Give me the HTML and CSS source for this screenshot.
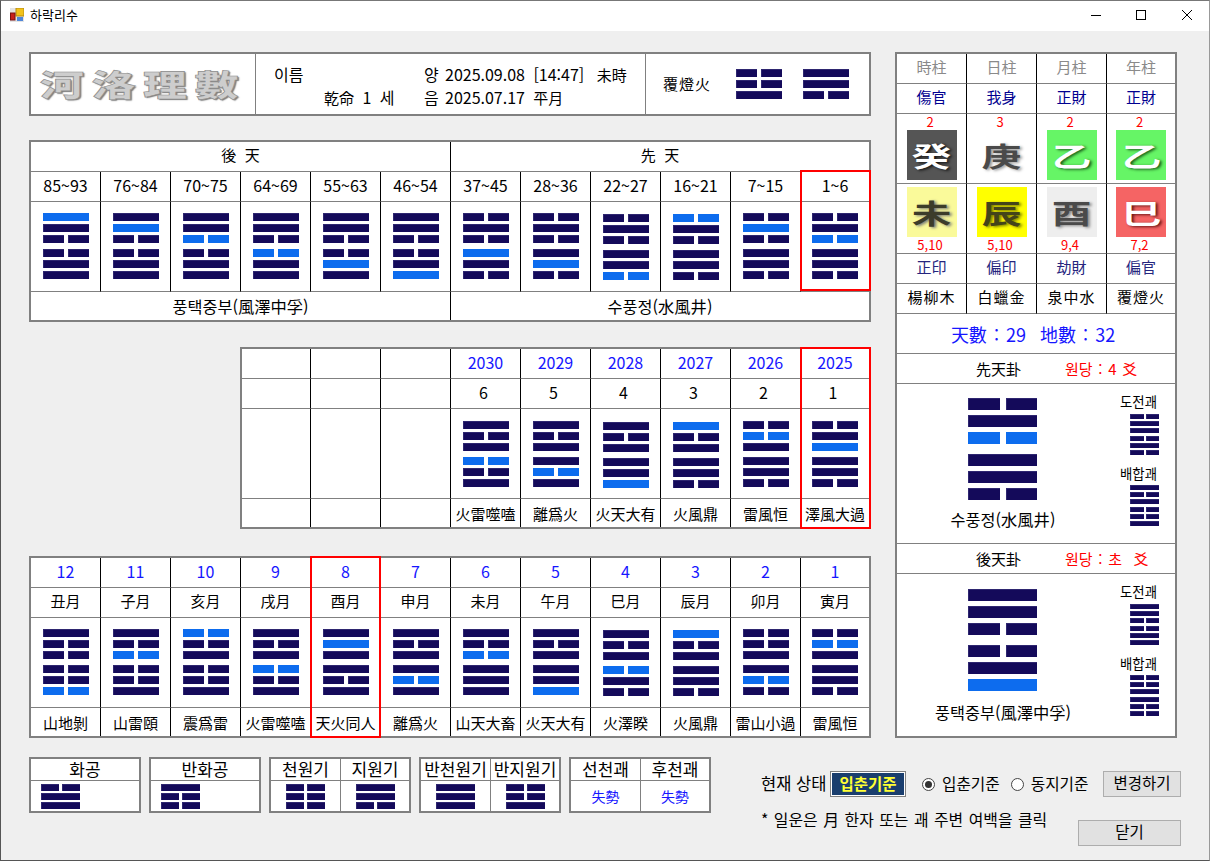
FILE: index.html
```html
<!DOCTYPE html>
<html lang="ko">
<head>
<meta charset="utf-8">
<title>하락리수</title>
<link rel="stylesheet" href="styles.css">
</head>
<body>
<div class="window">
  <header class="titlebar">
    <svg class="app-icon" viewBox="0 0 14 14" width="14" height="14"><rect x="0" y="0" width="14" height="14" fill="#e4e4e4"/><rect x="6" y="0" width="8" height="8" fill="#f2c21a" stroke="#b58a10" stroke-width="1"/><rect x="0.5" y="5" width="4.5" height="7" fill="#c8201c" stroke="#7a1010" stroke-width="1"/><rect x="7" y="9" width="6" height="4" fill="#4f86d8"/></svg>
    <span class="app-title">하락리수</span>
    <div class="controls">
      <svg viewBox="0 0 10 10" width="10" height="10"><path d="M0 5.5H10" stroke="#000" fill="none"/></svg>
      <svg viewBox="0 0 10 10" width="10" height="10"><rect x=".5" y=".5" width="9" height="9" stroke="#000" fill="none"/></svg>
      <svg viewBox="0 0 10 10" width="10" height="10"><path d="M0 0L10 10M10 0L0 10" stroke="#000" fill="none"/></svg>
    </div>
  </header>

  <main class="content">
    <div class="top">
      <div class="left">
        <section class="info box">
          <div class="logo"><span>河洛理數</span></div>
          <div class="person">
            <span class="kr">이름</span><span class="kr">양</span><span class="date"><span class="num">2025.09.08</span>  <span class="num">[14:47]</span>   未時</span>
            <span class="age">乾命  <span class="num">1</span>  <span class="kr">세</span></span><span class="kr">음</span><span class="date"><span class="num">2025.07.17</span>  平月</span>
          </div>
          <div class="nabeum">
            <span class="nab-name">覆燈火</span>
            <div class="hex tri"><i class="yin"></i><i class="yin"></i><i class="yang"></i></div>
            <div class="hex tri"><i class="yang"></i><i class="yang"></i><i class="yin"></i></div>
          </div>
        </section>

        <section class="grid box t-full">
          <div class="c span6 head">後  天</div><div class="c span6 head end">先  天</div>
          <div class="c num">85~93</div><div class="c num">76~84</div><div class="c num">70~75</div><div class="c num">64~69</div><div class="c num">55~63</div><div class="c num">46~54</div><div class="c num">37~45</div><div class="c num">28~36</div><div class="c num">22~27</div><div class="c num">16~21</div><div class="c num">7~15</div><div class="c num end">1~6</div>
          <div class="c h"><div class="hex"><i class="yang on"></i><i class="yang"></i><i class="yin"></i><i class="yin"></i><i class="yang"></i><i class="yang"></i></div></div>
          <div class="c h"><div class="hex"><i class="yang"></i><i class="yang on"></i><i class="yin"></i><i class="yin"></i><i class="yang"></i><i class="yang"></i></div></div>
          <div class="c h"><div class="hex"><i class="yang"></i><i class="yang"></i><i class="yin on"></i><i class="yin"></i><i class="yang"></i><i class="yang"></i></div></div>
          <div class="c h"><div class="hex"><i class="yang"></i><i class="yang"></i><i class="yin"></i><i class="yin on"></i><i class="yang"></i><i class="yang"></i></div></div>
          <div class="c h"><div class="hex"><i class="yang"></i><i class="yang"></i><i class="yin"></i><i class="yin"></i><i class="yang on"></i><i class="yang"></i></div></div>
          <div class="c h"><div class="hex"><i class="yang"></i><i class="yang"></i><i class="yin"></i><i class="yin"></i><i class="yang"></i><i class="yang on"></i></div></div>
          <div class="c h"><div class="hex"><i class="yin"></i><i class="yang"></i><i class="yin"></i><i class="yang on"></i><i class="yang"></i><i class="yin"></i></div></div>
          <div class="c h"><div class="hex"><i class="yin"></i><i class="yang"></i><i class="yin"></i><i class="yang"></i><i class="yang on"></i><i class="yin"></i></div></div>
          <div class="c h low"><div class="hex"><i class="yin"></i><i class="yang"></i><i class="yin"></i><i class="yang"></i><i class="yang"></i><i class="yin on"></i></div></div>
          <div class="c h low"><div class="hex"><i class="yin on"></i><i class="yang"></i><i class="yin"></i><i class="yang"></i><i class="yang"></i><i class="yin"></i></div></div>
          <div class="c h"><div class="hex"><i class="yin"></i><i class="yang on"></i><i class="yin"></i><i class="yang"></i><i class="yang"></i><i class="yin"></i></div></div>
          <div class="c h end"><div class="hex"><i class="yin"></i><i class="yang"></i><i class="yin on"></i><i class="yang"></i><i class="yang"></i><i class="yin"></i></div></div>
          <div class="c span6 foot name">풍택중부(風澤中孚)</div><div class="c span6 foot end name">수풍정(水風井)</div>
          <b class="red red-daeun"></b>
        </section>

        <section class="grid box t-years">
          <div class="c"></div><div class="c"></div><div class="c"></div><div class="c num blue">2030</div><div class="c num blue">2029</div><div class="c num blue">2028</div><div class="c num blue">2027</div><div class="c num blue">2026</div><div class="c num blue end">2025</div>
          <div class="c"></div><div class="c"></div><div class="c"></div><div class="c num seq">6</div><div class="c num seq">5</div><div class="c num seq">4</div><div class="c num seq">3</div><div class="c num seq">2</div><div class="c num seq end">1</div>
          <div class="c"></div><div class="c"></div><div class="c"></div>
          <div class="c h"><div class="hex"><i class="yang"></i><i class="yin"></i><i class="yang"></i><i class="yin on"></i><i class="yin"></i><i class="yang"></i></div></div>
          <div class="c h"><div class="hex"><i class="yang"></i><i class="yin"></i><i class="yang"></i><i class="yang"></i><i class="yin on"></i><i class="yang"></i></div></div>
          <div class="c h low"><div class="hex"><i class="yang"></i><i class="yin"></i><i class="yang"></i><i class="yang"></i><i class="yang"></i><i class="yang on"></i></div></div>
          <div class="c h low"><div class="hex"><i class="yang on"></i><i class="yin"></i><i class="yang"></i><i class="yang"></i><i class="yang"></i><i class="yin"></i></div></div>
          <div class="c h"><div class="hex"><i class="yin"></i><i class="yin on"></i><i class="yang"></i><i class="yang"></i><i class="yang"></i><i class="yin"></i></div></div>
          <div class="c h end"><div class="hex"><i class="yin"></i><i class="yang"></i><i class="yang on"></i><i class="yang"></i><i class="yang"></i><i class="yin"></i></div></div>
          <div class="c foot"></div><div class="c foot"></div><div class="c foot"></div><div class="c foot">火雷噬嗑</div><div class="c foot">離爲火</div><div class="c foot">火天大有</div><div class="c foot">火風鼎</div><div class="c foot">雷風恒</div><div class="c foot end">澤風大過</div>
          <b class="red red-year"></b>
        </section>

        <section class="grid box t-full">
          <div class="c num blue">12</div><div class="c num blue">11</div><div class="c num blue">10</div><div class="c num blue">9</div><div class="c num blue">8</div><div class="c num blue">7</div><div class="c num blue">6</div><div class="c num blue">5</div><div class="c num blue">4</div><div class="c num blue">3</div><div class="c num blue">2</div><div class="c num blue end">1</div>
          <div class="c">丑月</div><div class="c">子月</div><div class="c">亥月</div><div class="c">戌月</div><div class="c">酉月</div><div class="c">申月</div><div class="c">未月</div><div class="c">午月</div><div class="c">巳月</div><div class="c">辰月</div><div class="c">卯月</div><div class="c end">寅月</div>
          <div class="c h"><div class="hex"><i class="yang"></i><i class="yin"></i><i class="yin"></i><i class="yin"></i><i class="yin"></i><i class="yin on"></i></div></div>
          <div class="c h"><div class="hex"><i class="yang"></i><i class="yin"></i><i class="yin on"></i><i class="yin"></i><i class="yin"></i><i class="yang"></i></div></div>
          <div class="c h"><div class="hex"><i class="yin on"></i><i class="yin"></i><i class="yang"></i><i class="yin"></i><i class="yin"></i><i class="yang"></i></div></div>
          <div class="c h"><div class="hex"><i class="yang"></i><i class="yin"></i><i class="yang"></i><i class="yin on"></i><i class="yin"></i><i class="yang"></i></div></div>
          <div class="c h"><div class="hex"><i class="yang"></i><i class="yang on"></i><i class="yang"></i><i class="yang"></i><i class="yin"></i><i class="yang"></i></div></div>
          <div class="c h"><div class="hex"><i class="yang"></i><i class="yin"></i><i class="yang"></i><i class="yang"></i><i class="yin on"></i><i class="yang"></i></div></div>
          <div class="c h"><div class="hex"><i class="yang"></i><i class="yin"></i><i class="yin on"></i><i class="yang"></i><i class="yang"></i><i class="yang"></i></div></div>
          <div class="c h"><div class="hex"><i class="yang"></i><i class="yin"></i><i class="yang"></i><i class="yang"></i><i class="yang"></i><i class="yang on"></i></div></div>
          <div class="c h low"><div class="hex"><i class="yang"></i><i class="yin"></i><i class="yang"></i><i class="yin on"></i><i class="yang"></i><i class="yin"></i></div></div>
          <div class="c h low"><div class="hex"><i class="yang on"></i><i class="yin"></i><i class="yang"></i><i class="yang"></i><i class="yang"></i><i class="yin"></i></div></div>
          <div class="c h"><div class="hex"><i class="yin"></i><i class="yin"></i><i class="yang"></i><i class="yang"></i><i class="yin on"></i><i class="yin"></i></div></div>
          <div class="c h end"><div class="hex"><i class="yin"></i><i class="yin on"></i><i class="yang"></i><i class="yang"></i><i class="yang"></i><i class="yin"></i></div></div>
          <div class="c foot">山地剝</div><div class="c foot">山雷頤</div><div class="c foot">震爲雷</div><div class="c foot">火雷噬嗑</div><div class="c foot">天火同人</div><div class="c foot">離爲火</div><div class="c foot">山天大畜</div><div class="c foot">火天大有</div><div class="c foot">火澤睽</div><div class="c foot">火風鼎</div><div class="c foot">雷山小過</div><div class="c foot end">雷風恒</div>
          <b class="red red-month"></b>
        </section>
      </div>

      <aside class="panel box">
        <div class="pillars">
          <div class="c gray">時柱</div><div class="c gray">日柱</div><div class="c gray">月柱</div><div class="c gray end">年柱</div>
          <div class="c navy">傷官</div><div class="c navy">我身</div><div class="c navy">正財</div><div class="c navy end">正財</div>
          <div class="c stem"><div class="stack"><span class="score">2</span><span class="tile t-water"><span>癸</span></span></div></div>
          <div class="c stem"><div class="stack"><span class="score">3</span><span class="tile t-metal"><span>庚</span></span></div></div>
          <div class="c stem"><div class="stack"><span class="score">2</span><span class="tile t-wood"><span>乙</span></span></div></div>
          <div class="c stem end"><div class="stack"><span class="score">2</span><span class="tile t-wood"><span>乙</span></span></div></div>
          <div class="c stem lower"><div class="stack"><span class="tile t-earth"><span>未</span></span><span class="score">5,10</span></div></div>
          <div class="c stem lower"><div class="stack"><span class="tile t-earth2"><span>辰</span></span><span class="score">5,10</span></div></div>
          <div class="c stem lower"><div class="stack"><span class="tile t-metal2"><span>酉</span></span><span class="score">9,4</span></div></div>
          <div class="c stem lower end"><div class="stack"><span class="tile t-fire"><span>巳</span></span><span class="score">7,2</span></div></div>
          <div class="c navy2">正印</div><div class="c navy2">偏印</div><div class="c navy2">劫財</div><div class="c navy2 end">偏官</div>
          <div class="c wide">楊柳木</div><div class="c wide">白蠟金</div><div class="c wide">泉中水</div><div class="c wide end">覆燈火</div>
        </div>
        <div class="sum">天數 : 29  地數 : 32</div>
        <div class="sec-title"><span>先天卦</span><span class="wondang">원당 : 4 爻</span></div>
        <div class="sec-body">
          <div class="main-hex">
            <div class="hex lg"><i class="yin"></i><i class="yang"></i><i class="yin on"></i><i class="yang"></i><i class="yang"></i><i class="yin"></i></div>
            <div class="name">수풍정(水風井)</div>
          </div>
          <div class="side-hex">
            <span class="side-label">도전괘</span>
            <div class="hex sm"><i class="yin"></i><i class="yang"></i><i class="yang"></i><i class="yin"></i><i class="yang"></i><i class="yin"></i></div>
            <span class="side-label">배합괘</span>
            <div class="hex sm"><i class="yang"></i><i class="yin"></i><i class="yang"></i><i class="yin"></i><i class="yin"></i><i class="yang"></i></div>
          </div>
        </div>
        <div class="sec-title"><span>後天卦</span><span class="wondang">원당 : 초  爻</span></div>
        <div class="sec-body last">
          <div class="main-hex">
            <div class="hex lg"><i class="yang"></i><i class="yang"></i><i class="yin"></i><i class="yin"></i><i class="yang"></i><i class="yang on"></i></div>
            <div class="name">풍택중부(風澤中孚)</div>
          </div>
          <div class="side-hex">
            <span class="side-label">도전괘</span>
            <div class="hex sm"><i class="yang"></i><i class="yang"></i><i class="yin"></i><i class="yin"></i><i class="yang"></i><i class="yang"></i></div>
            <span class="side-label">배합괘</span>
            <div class="hex sm"><i class="yin"></i><i class="yin"></i><i class="yang"></i><i class="yang"></i><i class="yin"></i><i class="yin"></i></div>
          </div>
        </div>
      </aside>
    </div>

    <div class="bottom">
      <div class="mini box w1">
        <div class="m-head">화공</div>
        <div class="m-cell start"><div class="hex tri-sm"><i class="yin"></i><i class="yang"></i><i class="yang"></i></div></div>
      </div>
      <div class="mini box w1">
        <div class="m-head">반화공</div>
        <div class="m-cell start"><div class="hex tri-sm"><i class="yang"></i><i class="yin"></i><i class="yin"></i></div></div>
      </div>
      <div class="mini two box">
        <div class="m-head">천원기</div><div class="m-head">지원기</div>
        <div class="m-cell"><div class="hex tri-sm"><i class="yin"></i><i class="yin"></i><i class="yin"></i></div></div>
        <div class="m-cell"><div class="hex tri-sm"><i class="yang"></i><i class="yang"></i><i class="yin"></i></div></div>
      </div>
      <div class="mini two box">
        <div class="m-head">반천원기</div><div class="m-head">반지원기</div>
        <div class="m-cell"><div class="hex tri-sm"><i class="yang"></i><i class="yang"></i><i class="yang"></i></div></div>
        <div class="m-cell"><div class="hex tri-sm"><i class="yin"></i><i class="yin"></i><i class="yang"></i></div></div>
      </div>
      <div class="mini two box">
        <div class="m-head">선천괘</div><div class="m-head">후천괘</div>
        <div class="m-cell shise">失勢</div>
        <div class="m-cell shise">失勢</div>
      </div>
      <div class="status">
        <div class="status-row">
          <span class="st-label">현재 상태</span>
          <span class="badge">입춘기준</span>
          <span class="radio checked"></span><span class="st-text">입춘기준</span>
          <span class="radio second"></span><span class="st-text">동지기준</span>
          <button class="btn change" type="button">변경하기</button>
        </div>
        <div class="note-row">
          <span class="note">* 일운은 月 한자 또는 괘 주변 여백을 클릭</span>
          <button class="btn close" type="button">닫기</button>
        </div>
      </div>
    </div>
  </main>
</div>
</body>
</html>
```

FILE: styles.css
```css
* { box-sizing: border-box; }
html, body { margin: 0; padding: 0; }
body {
  font-family: "Noto Sans CJK KR", "Noto Sans CJK SC", sans-serif;
  font-size: 15px;
  line-height: 1;
  color: #000;
  background: #efefef;
}
.window {
  width: 1210px;
  height: 861px;
  border: 1px solid #555;
  border-top-color: #777;
  border-right-color: #999;
  background: #efefef;
  overflow: hidden;
}

/* title bar */
.titlebar {
  height: 30px;
  background: #fff;
  display: flex;
  align-items: center;
  padding-left: 9px;
}
.app-icon { margin-top: -2px; }
.app-title { font-size: 13px; margin-left: 6px; margin-top: -3px; }
.controls { margin-left: auto; display: flex; gap: 35px; padding-right: 17px; margin-top: -2px; }
.controls svg:nth-child(2) { margin-right: 1px; }

/* page */
.content { padding: 21px 0 0 28px; }
.top { display: flex; align-items: flex-start; }
.left { width: 842px; display: flex; flex-direction: column; }
.box { border: 2px solid #808080; background: #fff; position: relative; }

/* header strip */
.info { height: 64px; display: flex; }
.logo {
  width: 225px;
  border-right: 1px solid #808080;
  display: flex;
  align-items: center;
  justify-content: center;
  padding-bottom: 2px;
}
.logo span {
  display: inline-block;
  font-weight: 900;
  font-size: 30px;
  letter-spacing: 5px;
  color: #cdcdcd;
  -webkit-text-stroke: .6px #8e8e8e;
  text-shadow: 1px 1px 1px #777;
  transform: scaleX(1.47);
}
.person {
  width: 390px;
  border-right: 1px solid #808080;
  padding: 8px 0 0 18px;
  display: grid;
  grid-template-columns: 150px 21px 1fr;
  grid-auto-rows: 23px;
  align-items: center;
}
.age { padding-left: 50px; white-space: pre; }
.date { white-space: pre; }
.kr { font-size: 16px; }
.num { font-size: 16px; }
.nabeum { flex: 1; display: flex; align-items: center; padding-left: 17px; }
.nab-name { width: 73px; letter-spacing: 1px; padding-bottom: 2px; }
.nabeum .hex + .hex { margin-left: 21px; }

/* hexagram */
.hex {
  --w: 46px; --h: 8px; --g: 3px; --m: 3px; --yg: 4px;
  width: var(--w);
  display: flex;
  flex-direction: column;
  gap: var(--g);
}
.hex i {
  display: flex;
  justify-content: space-between;
  height: var(--h);
  --c: #140a5a;
  --e: #2e2670;
}
.hex i.on { --c: #0d6cee; --e: #0d6cee; }
.hex i::before, .hex i.yin::after {
  content: "";
  display: block;
  background: var(--c);
  box-shadow: inset 1px 1px 0 var(--e);
}
.hex i.yang::before { width: 100%; }
.hex i.yin::before, .hex i.yin::after { width: calc((100% - var(--yg)) / 2); }
.hex i:nth-child(4) { margin-top: var(--m); }
.hex.tri-sm { --w: 39px; --h: 7px; --g: 2px; --yg: 3px; }
.hex.lg { --w: 69px; --h: 12px; --g: 5px; --m: 5px; --yg: 6px; }
.hex.sm { --w: 29px; --h: 5px; --g: 2px; --m: 1px; --yg: 2px; }

/* tables */
.grid {
  display: grid;
  grid-template-rows: 30px 30px 90px 28px;
  height: 182px;
}
.t-full { grid-template-columns: repeat(11, 70px) 68px; width: 842px; margin-top: 24px; }
.t-full + .t-years { margin-top: 25px; }
.t-years { grid-template-columns: 69px repeat(7, 70px) 68px; width: 631px; margin-left: 211px; }
.t-years + .t-full { margin-top: 27px; }

.c {
  background: #fff;
  border-right: 1px solid #000;
  border-bottom: 1px solid #808080;
  display: flex;
  align-items: center;
  justify-content: center;
  white-space: pre;
  min-width: 0;
  padding-bottom: 4px;
}
.c.end { border-right: 0; }
.c.foot { border-bottom: 0; padding-bottom: 0; }
.c.seq { padding-right: 4px; }
.span6 { grid-column: span 6; }
.name { font-size: 16.3px; }
.blue { color: #1616ff; }
.c.h { align-items: flex-start; justify-content: flex-start; padding: 11px 0 0 12px; }
.c.h.end { padding-left: 11px; }
.c.h.low { padding-top: 12px; }
.t-years .c.h { padding-top: 12px; }
.t-years .c.h.low { padding-top: 13px; }

.red { position: absolute; display: block; border: 2px solid #ff0000; width: 71px; pointer-events: none; }
.red-daeun { left: 769px; top: 28px; height: 121px; }
.red-year { left: 558px; top: -2px; height: 182px; }
.red-month { left: 279px; top: -2px; height: 182px; }

/* right panel */
.panel {
  width: 282px;
  height: 686px;
  margin-left: 24px;
  display: flex;
  flex-direction: column;
}
.pillars {
  display: grid;
  grid-template-columns: 70px 70px 70px 68px;
  grid-template-rows: 30px 30px 70px 70px 30px 30px;
}
.gray { color: #8a8a8a; }
.navy { color: #000090; }
.navy2 { color: #25257e; }
.wide { letter-spacing: 1px; }
.c.stem { justify-content: center; align-items: flex-start; padding-bottom: 0; }
.stack { width: 50px; display: flex; flex-direction: column; align-items: center; }
.lower .stack { padding-top: 3px; }
.score { font-size: 13px; color: #ff0000; line-height: 16px; height: 16px; margin-left: -3px; }
.tile {
  width: 50px; height: 50px;
  display: flex;
  align-items: center;
  justify-content: center;
  font-weight: 700;
  font-size: 33px;
  overflow: hidden;
}
.tile span { display: block; transform: scale(1.2, .82); }
.t-water { background: #555; color: #fff; text-shadow: 2px 2px 3px #111; }
.t-metal { background: #fff; color: #4a4a4a; text-shadow: 2px 2px 3px #999; }
.t-wood { background: #66f566; color: #fff; text-shadow: 2px 2px 3px #185a18; }
.t-earth { background: #fafa9a; color: #3c3c2a; text-shadow: 2px 2px 3px #777; }
.t-earth2 { background: #ffff00; color: #44441a; text-shadow: 2px 2px 3px #777700; }
.t-metal2 { background: #eee; color: #4a4a4a; text-shadow: 2px 2px 3px #888; }
.t-fire { background: #f56464; color: #fff; text-shadow: 2px 2px 3px #6a1616; }

.sum {
  height: 40px;
  border-bottom: 1px solid #808080;
  display: flex;
  align-items: center;
  justify-content: center;
  padding: 0 6px 0 0;
  font-size: 18px;
  word-spacing: 2px;
  color: #1616ff;
  white-space: pre;
}
.sec-title {
  height: 30px;
  border-bottom: 1px solid #808080;
  display: flex;
  align-items: center;
  gap: 44px;
  padding: 0 0 1px 79px;
  white-space: pre;
}
.wondang { color: #ff0000; word-spacing: 1.5px; }
.sec-body {
  height: 160px;
  border-bottom: 1px solid #808080;
  display: flex;
}
.sec-body.last { height: 162px; border-bottom: 0; }
.main-hex { width: 212px; display: flex; flex-direction: column; align-items: center; padding-top: 14px; }
.main-hex .hex { margin-left: -1px; }
.main-hex .name { margin-top: 11px; line-height: 17px; }
.last .main-hex { padding-top: 15px; }
.last .main-hex .name { margin-top: 13px; }
.side-hex { flex: 1; display: flex; flex-direction: column; align-items: flex-start; padding: 9px 0 0 11px; }
.side-label { font-size: 13.4px; line-height: 16px; }
.side-hex .hex { margin: 5px 0 0 10px; }
.side-hex .side-label:nth-child(3) { margin-top: 10px; }
.side-hex .hex:nth-child(4) { margin-top: 4px; }

/* bottom strip */
.bottom { display: flex; align-items: flex-start; gap: 8px; margin-top: 19px; }
.mini {
  height: 56px;
  display: grid;
  grid-template-rows: 22px 30px;
}
.mini.w1 { width: 112px; }
.mini.two { width: 142px; grid-template-columns: 70px 68px; }
.m-head {
  border-bottom: 1px solid #808080;
  display: flex;
  align-items: center;
  justify-content: center;
  font-size: 17px;
  white-space: nowrap;
  padding-bottom: 2px;
}
.two .m-head:nth-child(1), .two .m-cell:nth-child(3) { border-right: 1px solid #808080; }
.m-cell { display: flex; align-items: center; justify-content: center; }
.m-cell.start { justify-content: flex-start; padding-left: 10px; }
.shise { color: #1616ff; font-size: 14px; }

.status { margin-left: 42px; width: 420px; padding-top: 14px; }
.status-row { display: flex; align-items: center; height: 26px; }
.st-label { font-size: 16.5px; width: 69px; white-space: pre; padding-bottom: 1px; }
.badge {
  width: 76px; height: 26px;
  background: #1a3e6e;
  border: 1px solid #808080;
  outline: 1px solid #fff;
  outline-offset: -2px;
  color: #ffff33;
  font-weight: 700;
  font-size: 15.5px;
  display: flex;
  align-items: center;
  justify-content: center;
  margin-right: 16px;
  padding-bottom: 1px;
}
.radio {
  width: 13px; height: 13px;
  border-radius: 50%;
  border: 1px solid #444;
  background: #fff;
  display: flex;
  align-items: center;
  justify-content: center;
  margin-right: 7px;
}
.radio.checked::after { content: ""; width: 7px; height: 7px; border-radius: 50%; background: #333; }
.radio.second { margin-left: 11px; }
.st-text { font-size: 15.7px; padding-bottom: 1px; }
.btn {
  font-family: inherit;
  font-size: 15.5px;
  line-height: 1;
  color: #000;
  background: #e1e1e1;
  border: 1px solid #adadad;
  padding: 0 0 2px;
}
.change { width: 78px; height: 26px; margin-left: auto; }
.note-row { display: flex; justify-content: space-between; align-items: flex-start; margin-top: 13px; }
.note { font-size: 15.9px; word-spacing: 1px; line-height: 20px; white-space: nowrap; }
.close { width: 103px; height: 26px; margin-top: 10px; }
```
